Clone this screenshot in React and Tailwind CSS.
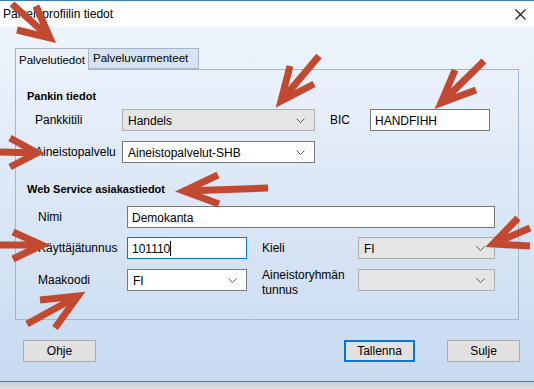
import React from 'react';

const font = { fontFamily: '"Liberation Sans", Arial, sans-serif' };

// red annotation arrows: tail, tip, two barb ends
const arrows = [
  { tail: [12, 4], tip: [50, 38], b1: [36, 6], b2: [17, 30] },
  { tail: [319, 56], tip: [281, 101], b1: [290, 66], b2: [314, 84] },
  { tail: [484, 61], tip: [441, 103], b1: [455, 70], b2: [476, 90] },
  { tail: [0, 152], tip: [37, 153], b1: [10, 138], b2: [10, 167] },
  { tail: [268, 188], tip: [184, 191], b1: [218, 175], b2: [219, 204] },
  { tail: [0, 245], tip: [42, 245], b1: [13, 232], b2: [13, 259] },
  { tail: [530, 228], tip: [493, 244], b1: [518, 218], b2: [530, 246] },
  { tail: [27, 324], tip: [78, 296], b1: [40, 300], b2: [55, 328] },
];

const Chevron = () => (
  <svg width="9" height="5" viewBox="0 0 9 5" className="shrink-0">
    <polyline points="0.5,0.5 4.5,4.5 8.5,0.5" fill="none" stroke="#5a5a5a" strokeWidth="1" />
  </svg>
);

const Combo = ({ value, gray, className }) => (
  <div
    className={`flex items-center justify-between h-[22px] pl-[5px] pr-[9px] border text-[12px] ${
      gray ? 'bg-[#e5e5e5] border-[#adadad]' : 'bg-white border-[#7a7a7a]'
    } ${className}`}
  >
    <span className="pt-[2px]">{value}</span>
    <Chevron />
  </div>
);

const Input = ({ value, focused, cursor, className }) => (
  <div
    className={`flex items-center h-[22px] pl-[4px] border bg-white text-[12px] ${
      focused ? 'border-[#0078d7]' : 'border-[#7a7a7a]'
    } ${className}`}
  >
    <span className="pt-[1px]">{value}</span>
    {cursor && <span className="w-px h-[15px] bg-black" />}
  </div>
);

const Button = ({ children, primary, className }) => (
  <div
    className={`flex items-center justify-center h-[22px] bg-[#e1e1e1] text-[12px] ${
      primary ? 'border-2 border-[#0078d7]' : 'border border-[#adadad]'
    } ${className}`}
  >
    {children}
  </div>
);

export default function App() {
  return (
    <div className="relative w-[534px] h-[389px] overflow-hidden text-black" style={font}>
      {/* title bar */}
      <div className="h-[27px] bg-white border-t border-[#3d7eb6] flex items-center justify-between pl-[3px] pr-[8px]">
        <span className="text-[12px]">Palveluprofiilin tiedot</span>
        <svg width="11" height="11" viewBox="0 0 11 11">
          <path d="M0.5 0.5 L10.5 10.5 M10.5 0.5 L0.5 10.5" stroke="#111" strokeWidth="1.1" />
        </svg>
      </div>

      {/* body */}
      <div className="h-[354px] bg-gradient-to-b from-[#eef4fc] to-[#c8daf0] pt-[21px] px-[15px]">
        <div className="flex items-end h-[21px] text-[11.5px]">
          <div className="relative z-10 -mb-px h-[22px] w-[74px] bg-[#ebf2fb] border border-b-0 border-[#a5b6ca] pl-[3px] flex items-center pt-[2px]">
            Palvelutiedot
          </div>
          <div className="h-[21px] w-[110px] bg-[#d5e3f3] border border-l-0 border-[#a5b6ca] pl-[4px] flex items-center">
            Palveluvarmenteet
          </div>
        </div>

        <div className="h-[251px] border border-[#a5b6ca] pl-[11px] pt-[18px] flex flex-col text-[12px]">
          <div className="font-bold text-[11px] leading-[16px]">Pankin tiedot</div>

          <div className="flex items-center h-[22px] mt-[5px]">
            <span className="ml-[8px] w-[87px]">Pankkitili</span>
            <Combo value="Handels" gray className="w-[193px]" />
            <span className="ml-[15px] w-[40px]">BIC</span>
            <Input value="HANDFIHH" className="w-[120px]" />
          </div>

          <div className="flex items-center h-[22px] mt-[10px]">
            <span className="ml-[8px] w-[87px]">Aineistopalvelu</span>
            <Combo value="Aineistopalvelut-SHB" className="w-[193px]" />
          </div>

          <div className="font-bold text-[11px] leading-[16px] mt-[18px]">Web Service asiakastiedot</div>

          <div className="flex items-center h-[22px] mt-[9px]">
            <span className="ml-[11px] w-[89px]">Nimi</span>
            <Input value="Demokanta" className="w-[368px]" />
          </div>

          <div className="flex items-center h-[22px] mt-[9px]">
            <span className="ml-[11px] w-[89px]">Käyttäjätunnus</span>
            <Input value="101110" focused cursor className="w-[120px]" />
            <span className="ml-[15px] w-[96px]">Kieli</span>
            <Combo value="FI" gray className="w-[137px]" />
          </div>

          <div className="flex items-start mt-[10px]">
            <span className="ml-[11px] w-[89px] h-[22px] flex items-center">Maakoodi</span>
            <Combo value="FI" className="w-[120px]" />
            <span className="ml-[15px] w-[96px] leading-[15px] -mt-[1px]">
              Aineistoryhmän
              <br />
              tunnus
            </span>
            <Combo value="" gray className="w-[137px]" />
          </div>
        </div>

        <div className="flex items-center mt-[20px]">
          <Button className="ml-[8px] w-[73px]">Ohje</Button>
          <Button primary className="ml-auto w-[71px]">Tallenna</Button>
          <Button className="ml-[32px] w-[73px] -mr-px">Sulje</Button>
        </div>
      </div>

      {/* bottom edge */}
      <div className="h-[8px] border-t border-[#2b88d8] bg-gradient-to-b from-[#c9ced6] to-[#dde1e6]" />

      {/* annotation arrows */}
      <svg className="absolute inset-0 pointer-events-none" width="534" height="389">
        {arrows.map((a, i) => (
          <g key={i} stroke="#c2482f" strokeWidth="7" fill="none">
            <line x1={a.tail[0]} y1={a.tail[1]} x2={a.tip[0]} y2={a.tip[1]} />
            <polyline
              points={`${a.b1[0]},${a.b1[1]} ${a.tip[0]},${a.tip[1]} ${a.b2[0]},${a.b2[1]}`}
              strokeLinejoin="miter"
              strokeMiterlimit="10"
            />
          </g>
        ))}
      </svg>
    </div>
  );
}
